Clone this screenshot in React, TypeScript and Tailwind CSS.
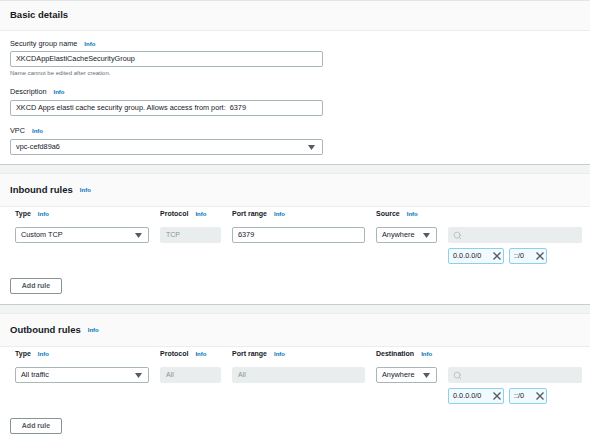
import { Search } from 'lucide-react';

const Info = () => <span className="ml-[7px] text-[6px] font-bold text-[#0073bb]">Info</span>;

const Caret = () => (
  <svg width="7" height="5" viewBox="0 0 7 5" className="shrink-0">
    <polygon points="0,0 7,0 3.5,5" fill="#545b64" />
  </svg>
);

function Select({ value, className = '' }: { value: string; className?: string }) {
  return (
    <div
      className={`flex h-4 items-center justify-between rounded-[2px] border border-[#aab7b8] bg-white pl-[5px] pr-[6px] text-[7.3px] text-[#16191f] ${className}`}
    >
      <span>{value}</span>
      <Caret />
    </div>
  );
}

function TextInput({ value }: { value: string }) {
  return (
    <div className="flex h-4 items-center whitespace-pre rounded-[2px] border border-[#aab7b8] bg-white px-[5px] text-[7.3px] text-[#16191f]">
      {value}
    </div>
  );
}

function Disabled({ value }: { value: string }) {
  return (
    <div className="flex h-4 items-center rounded-[2px] border border-[#eaeded] bg-[#eaeded] px-[5px] text-[7px] text-[#879596]">
      {value}
    </div>
  );
}

function Token({ value, width }: { value: string; width: string }) {
  return (
    <div
      className={`flex h-4 items-center justify-between rounded-[2px] border border-[#8fcfe9] bg-[#f1faff] pl-[4px] pr-[1px] text-[7.3px] text-[#16191f] ${width}`}
    >
      <span>{value}</span>
      <svg width="10" height="10" viewBox="0 0 10 10">
        <path d="M1.5 1.5l7 7M8.5 1.5l-7 7" stroke="#545b64" strokeWidth="1.4" />
      </svg>
    </div>
  );
}

function ColLabel({ text }: { text: string }) {
  return (
    <div className="flex h-[10px] items-center text-[7px] font-bold text-[#16191f]">
      {text}
      <Info />
    </div>
  );
}

function RulesSection({
  title,
  target,
  type,
  protocol,
  port,
}: {
  title: string;
  target: string;
  type: string;
  protocol: string;
  port: string;
}) {
  return (
    <section className="border-t border-[#eaeded] border-b border-b-[#c8cecf] bg-white">
      <header className="flex h-[33px] items-center border-b border-[#eaeded] bg-[#fafafa] px-[10px] pt-[1px]">
        <h2 className="text-[9.5px] font-bold text-[#16191f]">{title}</h2>
        <Info />
      </header>
      <div className="px-[10px] pb-[10px] pt-[2px]">
        <div className="grid grid-cols-[134px_61px_133px_61px_134px] gap-x-[11px] pl-[5px]">
          <ColLabel text="Type" />
          <ColLabel text="Protocol" />
          <ColLabel text="Port range" />
          <ColLabel text={target} />
          <div />
          <div className="mt-[8px]">
            <Select value={type} />
          </div>
          <div className="mt-[8px]">
            <Disabled value={protocol} />
          </div>
          <div className="mt-[8px]">
            {port === 'All' ? <Disabled value={port} /> : <TextInput value={port} />}
          </div>
          <div className="mt-[8px]">
            <Select value="Anywhere" />
          </div>
          <div className="mt-[8px]">
            <div className="flex h-4 items-center rounded-[2px] bg-[#eaeded] px-[5px]">
              <Search size={9} color="#aab7b8" strokeWidth={2} />
            </div>
            <div className="mt-[5px] flex gap-[5px]">
              <Token value="0.0.0.0/0" width="w-[56px]" />
              <Token value="::/0" width="w-[38px]" />
            </div>
          </div>
        </div>
        <button
          type="button"
          className="mt-[14px] flex h-4 w-[52px] items-center justify-center rounded-[2px] border border-[#879596] bg-white text-[7px] font-bold text-[#545b64]"
        >
          Add rule
        </button>
      </div>
    </section>
  );
}

function FieldLabel({ text }: { text: string }) {
  return (
    <div className="flex h-[10px] items-center text-[7.3px] text-[#16191f]">
      {text}
      <Info />
    </div>
  );
}

export default function App() {
  return (
    <div className="flex min-h-screen w-[590px] flex-col gap-[8px] bg-[#f2f3f3] font-['Liberation_Sans',Arial,sans-serif]">
      <section className="border-t border-[#e3e6e6] border-b border-b-[#c8cecf] bg-white">
        <header className="flex h-[30px] items-center border-b border-[#eaeded] bg-[#fafafa] px-[10px]">
          <h2 className="text-[9.5px] font-bold text-[#16191f]">Basic details</h2>
        </header>
        <div className="w-[333px] px-[10px] pb-[9px] pt-[8px]">
          <FieldLabel text="Security group name" />
          <div className="mt-[2px]">
            <TextInput value="XKCDAppElastiCacheSecurityGroup" />
          </div>
          <p className="mt-[2px] h-[8px] text-[6px] leading-[8px] text-[#687078]">
            Name cannot be edited after creation.
          </p>
          <div className="mt-[10px]">
            <FieldLabel text="Description" />
          </div>
          <div className="mt-[3px]">
            <TextInput value="XKCD Apps elasti cache security group. Allows access from port:  6379" />
          </div>
          <div className="mt-[10px]">
            <FieldLabel text="VPC" />
          </div>
          <div className="mt-[3px]">
            <Select value="vpc-cefd89a6" className="pr-[7px]" />
          </div>
        </div>
      </section>
      <RulesSection title="Inbound rules" target="Source" type="Custom TCP" protocol="TCP" port="6379" />
      <RulesSection title="Outbound rules" target="Destination" type="All traffic" protocol="All" port="All" />
    </div>
  );
}
